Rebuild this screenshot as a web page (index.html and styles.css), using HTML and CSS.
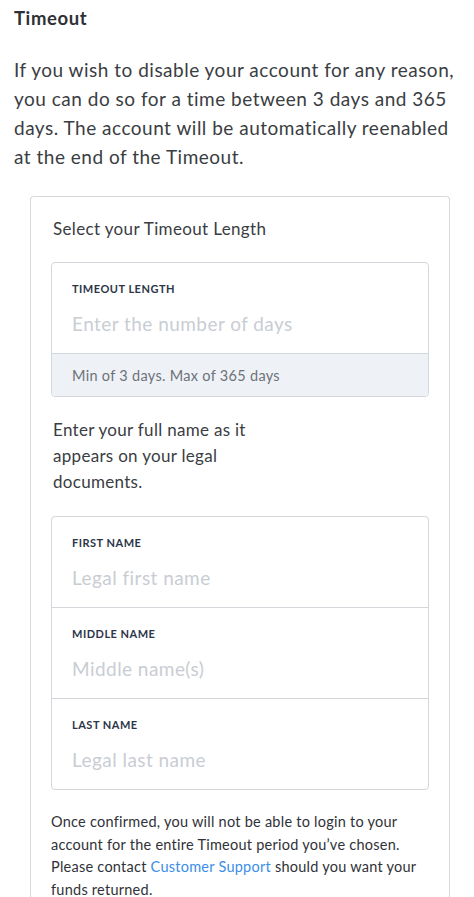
FILE: index.html
```html
<!DOCTYPE html>
<html>
<head>
<meta charset="utf-8">
<link rel="stylesheet" href="styles.css">
</head>
<body>
<div class="page">
  <h1 class="title">Timeout</h1>
  <p class="intro">If you wish to disable your account for any reason, you can do so for a time between 3 days and 365 days. The account will be automatically reenabled at the end of the Timeout.</p>
  <div class="card">
    <p class="card-heading">Select your Timeout Length</p>
    <div class="field-group">
      <label class="field">
        <span class="field-label">TIMEOUT LENGTH</span>
        <input class="field-input" type="text" placeholder="Enter the number of days">
      </label>
      <div class="field-hint">Min of 3 days. Max of 365 days</div>
    </div>
    <p class="card-text">Enter your full name as it appears on your legal documents.</p>
    <div class="field-group">
      <label class="field">
        <span class="field-label">FIRST NAME</span>
        <input class="field-input" type="text" placeholder="Legal first name">
      </label>
      <label class="field">
        <span class="field-label">MIDDLE NAME</span>
        <input class="field-input" type="text" placeholder="Middle name(s)">
      </label>
      <label class="field">
        <span class="field-label">LAST NAME</span>
        <input class="field-input" type="text" placeholder="Legal last name">
      </label>
    </div>
    <p class="note">Once confirmed, you will not be able to login to your account for the entire Timeout period you’ve chosen. Please contact <a class="link" href="#">Customer Support</a> should you want your funds returned.</p>
  </div>
</div>
</body>
</html>
```

FILE: styles.css
```css
* { box-sizing: border-box; }
html, body { margin: 0; padding: 0; background: #fff; }
body {
  font-family: Lato, "Open Sans", Arial, sans-serif;
  color: #3a3d42;
}
.page {
  padding: 4px 14px 0 14px;
}
.title {
  margin: 0;
  font-size: 18.5px;
  font-weight: 700;
  line-height: 28px;
  letter-spacing: 0.6px;
  color: #2e3135;
}
.intro {
  margin: 23px 0 0 0;
  font-size: 19px;
  line-height: 29px;
  color: #3a3d42;
  letter-spacing: 0.5px;
}
.card {
  margin: 25px 10px 0 16px;
  border: 1px solid #d6d8db;
  border-bottom: none;
  border-radius: 4px 4px 0 0;
  padding: 20px 20px 0 20px;
}
.card-heading {
  margin: 0 0 0 2px;
  font-size: 17px;
  line-height: 24px;
  letter-spacing: 0.35px;
  color: #3a3d42;
}
.field-group {
  margin-top: 21px;
  border: 1px solid #d3d6da;
  border-radius: 4px;
  overflow: hidden;
}
.field {
  display: flex;
  flex-direction: column;
  padding: 19px 20px 17px 20px;
  border-top: 1px solid #d3d6da;
}
.field:first-child { border-top: none; }
.field-label {
  font-size: 11px;
  line-height: 14px;
  font-weight: 700;
  letter-spacing: 0.5px;
  color: #2c3548;
  margin-bottom: 14px;
}
.field-input {
  border: none;
  outline: none;
  padding: 0;
  margin: 0;
  height: 26px;
  font-family: inherit;
  font-size: 19px;
  letter-spacing: 0.45px;
  color: #3a3d42;
  background: transparent;
}
.field-input::placeholder { color: #c9cdd3; }
.field-hint {
  border-top: 1px solid #d3d6da;
  background: #eef2f7;
  padding: 0 20px;
  height: 43px;
  display: flex;
  align-items: center;
  font-size: 14.5px;
  letter-spacing: 0.3px;
  color: #6d7178;
}
.card-text {
  margin: 20px 0 0 2px;
  max-width: 200px;
  font-size: 17px;
  line-height: 26px;
  letter-spacing: 0.3px;
  color: #3a3d42;
}
.note {
  margin: 21px 0 0 0;
  font-size: 14.5px;
  line-height: 22.5px;
  letter-spacing: 0.25px;
  color: #2f3238;
}
.link { color: #3b8ee8; text-decoration: none; }
```
